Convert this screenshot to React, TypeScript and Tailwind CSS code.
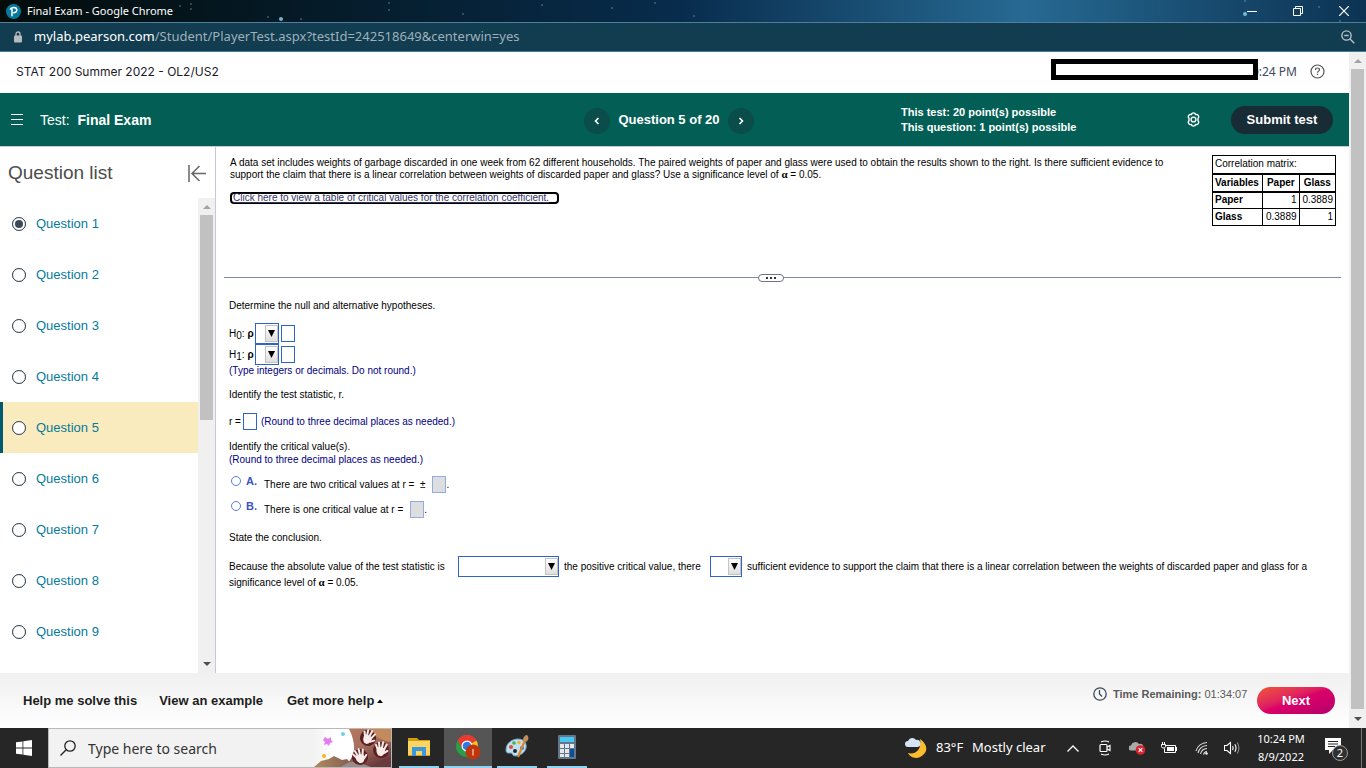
import type { ReactNode } from "react";

const QUESTIONS = [1, 2, 3, 4, 5, 6, 7, 8, 9];
const CURRENT = 5;

const STARS: [number, number, number][] = [
  [180, 6, 1], [191, 4, 1], [191, 9, 1], [268, 17, 1], [281, 19, 2], [301, 19, 1], [389, 3, 1], [389, 10, 1],
  [463, 14, 1], [542, 5, 1], [612, 8, 1], [655, 3, 1], [694, 16, 1], [1245, 1, 1], [1245, 14, 2], [1319, 7, 1], [1340, 21, 1],
];

function TitleBar() {
  return (
    <div className="relative flex h-[23px] shrink-0 items-center overflow-hidden border-b border-[#4f7f9b] bg-linear-to-r from-[#030c0b] via-[#082c4d] to-[#0c3353] pl-[6px] text-white">
      <div className="absolute inset-y-0 right-0 left-1/2 bg-linear-to-r from-transparent via-[#2a709a] to-transparent opacity-90" />
      <svg className="absolute inset-0 h-full w-full" aria-hidden="true">
        {STARS.map(([x, y, r]) => (
          <circle key={`${x}-${y}`} cx={x} cy={y} r={r} fill="#7fc4e2" opacity={r > 1 ? 0.9 : 0.4} />
        ))}
      </svg>
      <svg className="relative mr-[6px] size-[15px]" viewBox="0 0 16 16" aria-hidden="true">
        <circle cx="8" cy="8" r="8" fill="#047a9c" />
        <path d="M6.400 13V4.200M4.400 6c.6-1.700 2-2.400 3.800-2.400 2 0 3.300 1.100 3.300 2.800 0 1.900-1.500 3-3.900 2.800" fill="none" stroke="#fff" strokeWidth="1.600" />
      </svg>
      <span className="relative font-['Noto_Sans',sans-serif] text-[11px]">Final Exam - Google Chrome</span>
      <div className="relative ml-auto flex items-center pr-[17px]">
        <button type="button" aria-label="Minimize" className="mr-[36px]">
          <svg width="10" height="10" viewBox="0 0 10 10"><path d="M0 5.500h10" stroke="#fff" /></svg>
        </button>
        <button type="button" aria-label="Restore" className="mr-[36px]">
          <svg width="10" height="10" viewBox="0 0 10 10" fill="none" stroke="#fff">
            <path d="M.5 2.500h7v7h-7zM2.500 2.500v-2h7v7h-2" />
          </svg>
        </button>
        <button type="button" aria-label="Close">
          <svg width="10" height="10" viewBox="0 0 10 10"><path d="M0 0l10 10M10 0L0 10" stroke="#fff" strokeWidth="1.200" /></svg>
        </button>
      </div>
    </div>
  );
}

function AddressBar() {
  return (
    <div className="flex h-[29px] shrink-0 items-center border-b border-[#4a7a93] bg-[#123c50] pl-[14px] pr-[11px]">
      <svg className="mr-[12px]" width="8" height="12" viewBox="0 0 8 12" aria-hidden="true">
        <path d="M2 5V3a2 2 0 014 0v2" fill="none" stroke="#b5bcc1" strokeWidth="1.300" />
        <rect y="4.500" width="8" height="7" rx="1" fill="#b5bcc1" />
      </svg>
      <span className="font-['Noto_Sans',sans-serif] text-[13px] text-[#9fb0b9]">
        <span className="text-white">mylab.pearson.com</span>/Student/PlayerTest.aspx?testId=242518649&amp;centerwin=yes
      </span>
      <svg className="ml-auto" width="14" height="14" viewBox="0 0 14 14" fill="none" stroke="#b8c2c8" strokeWidth="1.400" aria-hidden="true">
        <circle cx="5.500" cy="5.500" r="4.600" />
        <path d="M9 9l4.300 4.300M3.300 5.500h4.400" />
      </svg>
    </div>
  );
}

function ScrollArrow({ up, dark }: { up?: boolean; dark?: boolean }) {
  return (
    <svg className="my-[6px] shrink-0" width="8" height="5" viewBox="0 0 8 5" aria-hidden="true">
      <path d={up ? "M0 5L4 1l4 4z" : "M0 0l4 4 4-4z"} fill={dark ? "#505050" : "#a3a3a3"} />
    </svg>
  );
}

function CourseBar() {
  return (
    <div className="flex h-[41px] shrink-0 items-center pb-[2px] pl-4 pr-[24px]">
      <span className="font-['Inter',sans-serif] text-[12px] text-[#1a1a2a]">STAT 200 Summer 2022 - OL2/US2</span>
      {/* name box sits over the start of the clock */}
      <div className="relative z-10 mb-[4px] ml-auto h-[21px] w-[207px] border-[5px] border-black bg-white" />
      <span className="-ml-[6px] font-['Noto_Sans',sans-serif] text-[12px] text-[#3d4a5a]">0:24 PM</span>
      <button type="button" aria-label="Help" className="ml-[13px]">
        <svg width="15" height="15" viewBox="0 0 15 15" fill="none" stroke="#555" strokeWidth="1.200">
          <circle cx="7.500" cy="7.500" r="6.500" />
          <path d="M5.500 6c0-1.300.8-2 2-2s2 .7 2 1.800c0 1.300-2 1.400-2 2.900M7.500 9.800v1.200" />
        </svg>
      </button>
    </div>
  );
}

function RoundArrow({ label, d }: { label: string; d: string }) {
  return (
    <button type="button" aria-label={label} className="mt-[2px] grid size-[26px] place-items-center rounded-full bg-[#0a4d4a]">
      <svg width="6" height="8" viewBox="0 0 6 8" fill="none" stroke="#fff" strokeWidth="1.600"><path d={d} /></svg>
    </button>
  );
}

function TestBar() {
  return (
    <header className="flex h-[54px] shrink-0 items-center border-b border-[#c7c7d5] bg-[#035f55] pl-[11px] pr-4 text-white">
      <button type="button" aria-label="Menu" className="mr-[17px]">
        <svg width="12" height="11" viewBox="0 0 12 11" stroke="#fff"><path d="M0 .5h12M0 5.500h12M0 10.500h12" /></svg>
      </button>
      <h1 className="w-[544px] pt-px text-[14px]">
        Test: <b className="ml-1">Final Exam</b>
      </h1>
      <RoundArrow label="Previous question" d="M4.500 1L1.500 4l3 3" />
      <span className="w-[118px] text-center text-[13px] font-bold">Question 5 of 20</span>
      <RoundArrow label="Next question" d="M1.500 1l3 3-3 3" />
      <div className="ml-[147px] pt-px text-[11px] leading-[15px] font-bold">
        <p>This test: 20 point(s) possible</p>
        <p>This question: 1 point(s) possible</p>
      </div>
      <button type="button" aria-label="Settings" className="ml-auto">
        <svg width="15" height="15" viewBox="0 0 15 15" fill="none" stroke="#fff" strokeWidth="1.400" strokeLinejoin="round">
          <circle cx="7.500" cy="7.500" r="2.400" />
          <path d="M5.900 1.500q1.600-1.200 3.200 0l.5 1.100 1.400-.2q1.900.8 1.700 2.700L12 6.300v2.400l.7 1.200q.2 1.900-1.700 2.700l-1.400-.2-.5 1.100q-1.600 1.200-3.200 0l-.5-1.100-1.400.2q-1.900-.8-1.700-2.700L3 8.700V6.300l-.7-1.200Q2.100 3.200 4 2.400l1.400.2z" />
        </svg>
      </button>
      <button type="button" className="ml-[30px] h-[28px] w-[102px] rounded-full bg-[#182c36] text-[13px] font-bold">Submit test</button>
    </header>
  );
}

function QuestionList() {
  return (
    <aside className="flex w-[216px] shrink-0 flex-col border-r border-[#c7c7d5]">
      <div className="flex h-[51px] items-center justify-between pt-px pl-2 pr-[9px]">
        <h2 className="text-[19px] text-[#4d4d4d]">Question list</h2>
        <button type="button" aria-label="Collapse list">
          <svg width="18" height="17" viewBox="0 0 18 17" fill="none" stroke="#666" strokeWidth="1.500">
            <path d="M1 0v17M4 8.500h14M11.500 1L4 8.500l7.500 7.500" />
          </svg>
        </button>
      </div>
      <div className="flex grow">
        <ul className="grow">
          {QUESTIONS.map((n) => (
            <li key={n} className={n === CURRENT ? "border-l-[3px] border-[#005a70] bg-[#f9ebbd]" : "border-l-[3px] border-transparent"}>
              <label className="flex h-[51px] items-center gap-[10px] pl-[9px] text-[13px] text-[#047a9c]">
                <input
                  type="radio"
                  name="question"
                  defaultChecked={n === 1}
                  className="size-[14px] appearance-none rounded-full border border-[#3c4a57] bg-white p-[2px] outline-1 -outline-offset-1 outline-[#3c4a57]/40 checked:bg-[#3c4a57] checked:bg-clip-content"
                />
                Question {n}
              </label>
            </li>
          ))}
        </ul>
        <div className="flex w-[17px] flex-col items-center bg-[#f0f0f0]">
          <ScrollArrow up />
          <div className="h-[205px] w-[13px] bg-[#c1c1c1]" />
          <div className="mt-auto"><ScrollArrow dark /></div>
        </div>
      </div>
    </aside>
  );
}

function Dropdown({ label, className }: { label: string; className: string }) {
  return (
    <span className={`relative block h-[21px] shrink-0 ${className}`}>
      <select aria-label={label} className="block h-full w-full appearance-none border border-[#2f63c9] bg-white" />
      <span className="pointer-events-none absolute top-[2px] right-[1px] grid h-[17px] w-[13px] place-items-center border border-[#c4c4c4] bg-linear-to-b from-white to-[#dedede]">
        <svg width="7" height="7" viewBox="0 0 7 7" aria-hidden="true"><path d="M0 0h7L3.500 7z" /></svg>
      </span>
    </span>
  );
}

function Blank({ label, disabled }: { label: string; disabled?: boolean }) {
  return (
    <input
      aria-label={label}
      disabled={disabled}
      className="h-[17px] w-[14px] shrink-0 border border-[#2f63c9] bg-white disabled:border-[#93acdf] disabled:bg-[#dedede]"
    />
  );
}

function Hypothesis({ sub }: { sub: string }) {
  return (
    <div className="flex h-[21px] items-center">
      <span className="flex w-[26px] items-center">
        H<span className="mt-[5px]">{sub}</span>: <b className="ml-[3px]">ρ</b>
      </span>
      <Dropdown label={`Relation for H${sub}`} className="mr-[2px] w-[24px]" />
      <Blank label={`Value for H${sub}`} />
    </div>
  );
}

function Choice({ letter, children }: { letter: string; children: ReactNode }) {
  return (
    <div className="flex h-[17px] items-center">
      <label className="mb-[8px] flex w-[35px] items-center gap-[5px] pl-[2px] text-[11px] font-bold text-[#3a53c5]">
        <input type="radio" name="critical" className="size-[10px] appearance-none rounded-full border border-[#5d7bd0]" />
        {letter}.
      </label>
      {children}
    </div>
  );
}

const Alpha = () => <b className="font-['Liberation_Serif',serif] text-[11px] leading-[10px]">α</b>;

function CorrelationTable() {
  return (
    <table className="h-[71px] w-[124px] shrink-0 border-collapse border border-black leading-[12px] [&_td]:border [&_td]:border-black [&_td]:px-[2px] [&_th]:border [&_th]:border-black [&_th]:px-[2px]">
      <thead>
        <tr className="h-[18px] border-b-2 border-black">
          <td colSpan={3}>Correlation matrix:</td>
        </tr>
        <tr className="h-[18px] border-b-2 border-black">
          <th className="text-left">Variables</th>
          <th>Paper</th>
          <th>Glass</th>
        </tr>
      </thead>
      <tbody>
        <tr className="h-[17px]">
          <th className="text-left">Paper</th>
          <td className="text-right">1</td>
          <td className="text-right">0.3889</td>
        </tr>
        <tr className="h-[17px]">
          <th className="text-left">Glass</th>
          <td className="text-right">0.3889</td>
          <td className="text-right">1</td>
        </tr>
      </tbody>
    </table>
  );
}

function Exercise() {
  return (
    <main className="min-w-0 grow text-[10px] leading-[12px] text-black">
      <section className="flex h-[130px] justify-between pt-[8px] pr-[13px] pl-[14px]">
        <div className="pt-[2px]">
          <p>
            A data set includes weights of garbage discarded in one week from 62 different households. The paired weights of paper and glass were used to obtain the results shown to the right. Is there sufficient evidence to
            <br />
            support the claim that there is a linear correlation between weights of discarded paper and glass? Use a significance level of <Alpha /> = 0.05.
          </p>
          <a href="#critical-values" className="mt-[11px] block h-[12px] w-[329px] rounded-[4px] border-2 border-black pl-px leading-[8px] whitespace-nowrap text-[#333366] underline">
            Click here to view a table of critical values for the correlation coefficient.
          </a>
        </div>
        <CorrelationTable />
      </section>
      <div className="mx-2 flex h-px items-center justify-center bg-[#8189a0] pr-6">
        <button type="button" aria-label="Resize panes" className="grid h-[8px] w-[26px] place-items-center rounded-full border border-[#6b7489] bg-white">
          <svg width="10" height="2" viewBox="0 0 10 2"><path d="M0 0h2v2H0zM4 0h2v2H4zM8 0h2v2H8z" fill="#333" /></svg>
        </button>
      </div>
      <section className="px-[13px] pt-[22px]">
        <p className="mb-[11px]">Determine the null and alternative hypotheses.</p>
        <Hypothesis sub="0" />
        <Hypothesis sub="1" />
        <p className="text-[#000080]">(Type integers or decimals. Do not round.)</p>
        <p className="my-[12px]">Identify the test statistic, r.</p>
        <div className="flex items-center">
          <span className="w-[14px]">r =</span>
          <Blank label="Test statistic r" />
          <span className="ml-1 text-[#000080]">(Round to three decimal places as needed.)</span>
        </div>
        <p className="mt-[11px]">Identify the critical value(s).</p>
        <p className="mt-px mb-[10px] text-[#000080]">(Round to three decimal places as needed.)</p>
        <Choice letter="A">
          <span className="mr-[7px]">There are two critical values at r = &nbsp;±</span>
          <Blank label="Critical values" disabled />.
        </Choice>
        <div className="h-[8px]" />
        <Choice letter="B">
          <span className="mr-[7px]">There is one critical value at r =</span>
          <Blank label="Critical value" disabled />.
        </Choice>
        <p className="mt-[14px] mb-[12px]">State the conclusion.</p>
        <div className="flex items-center gap-[5px] whitespace-nowrap">
          <span className="w-[224px]">Because the absolute value of the test statistic is</span>
          <Dropdown label="Comparison" className="w-[101px]" />
          <span className="w-[141px]">the positive critical value, there</span>
          <Dropdown label="Is or is not" className="w-[32px]" />
          <span>sufficient evidence to support the claim that there is a linear correlation between the weights of discarded paper and glass for a</span>
        </div>
        <p>significance level of <Alpha /> = 0.05.</p>
      </section>
    </main>
  );
}

function HelpFooter() {
  return (
    <footer className="flex h-[55px] shrink-0 items-center bg-linear-to-b from-[#f0f0f0] to-white pl-[23px] pr-[14px] text-[13px] font-bold text-[#1d1d1d]">
      <button type="button" className="mr-[22px]">Help me solve this</button>
      <button type="button" className="mr-[24px]">View an example</button>
      <button type="button" className="flex items-center gap-[3px]">
        Get more help
        <svg width="6" height="4" viewBox="0 0 6 4" aria-hidden="true"><path d="M0 4l3-3.500L6 4z" /></svg>
      </button>
      <svg className="mr-[6px] mb-[14px] ml-auto" width="14" height="14" viewBox="0 0 14 14" fill="none" stroke="#3c4a57" strokeWidth="1.300" aria-hidden="true">
        <circle cx="7" cy="7" r="6.200" />
        <path d="M6.500 3v4l2.500 2.500" />
      </svg>
      <span className="mb-[12px] w-[137px] text-[11px] whitespace-nowrap text-[#5a5a5a]">
        Time Remaining: <span className="font-normal">01:34:07</span>
      </span>
      <button type="button" className="ml-[7px] h-[27px] w-[78px] rounded-full bg-linear-to-br from-[#f0522b] via-[#db0068] to-[#b5006c] text-[13px] text-white">Next</button>
    </footer>
  );
}

function SearchArt() {
  return (
    <svg className="h-full w-[77px] shrink-0" viewBox="0 0 77 38" preserveAspectRatio="none" aria-hidden="true">
      <defs>
        <linearGradient id="skin" x1="0" y1="0" x2=".6" y2="1">
          <stop offset="0" stopColor="#b9775a" />
          <stop offset=".5" stopColor="#a5705f" />
          <stop offset="1" stopColor="#6b3a3c" />
        </linearGradient>
        <linearGradient id="dusk" x1="0" y1="0" x2="1" y2="0">
          <stop offset="0" stopColor="#b08a5c" />
          <stop offset="1" stopColor="#7f5b52" />
        </linearGradient>
        <linearGradient id="fade" x1="0" y1="0" x2="1" y2="0">
          <stop offset="0" stopColor="#f2f2f2" />
          <stop offset=".5" stopColor="#fff" />
        </linearGradient>
        <g id="hand">
          <ellipse rx="8" ry="8" fill="#5d1f24" />
          <g stroke="#f6ece8" strokeWidth="2" strokeLinecap="round">
            <path d="M-4-1l-2-3M-2-2l-1.500-5M.5-2.500V-8M3-1.500l1.500-5M4 2l2.500-2.500" />
          </g>
          <path d="M-4.500-1.500Q0-4 4-1.500 5 4 1.500 6h-3Q-5 3-4.500-1.500z" fill="#f6ece8" />
        </g>
      </defs>
      <path d="M0 0h40v38H0z" fill="url(#fade)" />
      <path d="M35 0h42v38H28c7-3 13-12 12-22C39 8 37 4 35 0z" fill="url(#skin)" />
      <path d="M55 0h22v13C68 12 60 7 55 0z" fill="#c48a5c" />
      <path d="M0 38l7-6 8-2 5-3 8 4 5-1 7 8z" fill="url(#dusk)" />
      <path d="M27 38c6-5 14-7 22-3l8 3z" fill="#9c8b8d" />
      <use href="#hand" transform="translate(54 9) rotate(28)" />
      <use href="#hand" transform="translate(67 21) rotate(12)" />
      <use href="#hand" transform="translate(46 28) rotate(-14)" />
      <path d="M11 8l3 2 3-2v3l2 2-3 1-1 3-2-2-3 1 1-3-2-2z" fill="#e27cf0" />
      <circle cx="29" cy="5" r="2" fill="#62d4e6" />
      <circle cx="10" cy="27" r="2" fill="#ffb21a" />
    </svg>
  );
}

function TaskButton({ label, active, children }: { label: string; active?: boolean; children: ReactNode }) {
  return (
    <button
      type="button"
      aria-label={label}
      className={active ? "grid h-full w-[48px] place-items-center border-b-2 border-[#8fd3f2] bg-[#555555]" : "mx-[5px] grid h-full w-[40px] place-items-center border-b-2 border-[#8fd3f2]"}
    >
      {children}
    </button>
  );
}

function Taskbar() {
  return (
    <div className="flex h-[40px] shrink-0 items-center bg-[#262627] font-['Noto_Sans',sans-serif] text-white">
      <button type="button" aria-label="Start" className="grid w-[48px] place-items-center">
        <svg width="16" height="16" viewBox="0 0 16 16" fill="#fff"><path d="M0 2.300l6.500-.9v6.200H0zM7.300 1.300L16 0v7.600H7.300zM0 8.400h6.500v6.200L0 13.700zM7.300 8.400H16V16l-8.700-1.300z" /></svg>
      </button>
      <div className="flex h-full w-[344px] items-center border border-[#b9b9b9] bg-[#f2f2f2] pl-[11px]">
        <svg className="mr-[12px] shrink-0" width="16" height="16" viewBox="0 0 16 16" fill="none" stroke="#222" strokeWidth="1.300" aria-hidden="true">
          <circle cx="10" cy="6" r="5.200" />
          <path d="M6.200 9.800L.5 15.500" />
        </svg>
        <input aria-label="Search" placeholder="Type here to search" className="min-w-0 grow text-[14px] placeholder:text-[#333]" />
        <SearchArt />
      </div>
      <div className="ml-[2px] flex h-full">
        <TaskButton label="File Explorer">
          <svg width="22" height="20" viewBox="0 0 22 20">
            <path d="M0 1h9l2 2h11v16H0z" fill="#d99b16" />
            <path d="M0 4h22v14H0z" fill="#fcd462" />
            <path d="M4 19v-9h14v9h-4v-5H8v5z" fill="#3b97dc" />
          </svg>
        </TaskButton>
        <TaskButton label="Google Chrome" active>
          <svg width="26" height="26" viewBox="0 0 26 26">
            <path d="M12 12L2.500 6.500A11 11 0 0121.500 6.500z" fill="#e63b2e" />
            <path d="M12 12L2.500 6.500A11 11 0 0012 23z" fill="#24a148" />
            <path d="M12 12L21.500 6.500A11 11 0 0112 23z" fill="#fcc31e" />
            <path d="M12 6.500h9.500A11 11 0 002.500 6.500l4.700 8z" fill="#e63b2e" />
            <circle cx="12" cy="12" r="5.500" fill="#fff" />
            <circle cx="12" cy="12" r="4.300" fill="#3278e5" />
            <circle cx="18" cy="18" r="7.500" fill="#bf360c" />
            <path d="M18 15v6.500" stroke="#f1c6b8" strokeWidth="1.300" />
          </svg>
        </TaskButton>
        <TaskButton label="Paint">
          <svg width="24" height="24" viewBox="0 0 24 24">
            <path d="M1 15C1 8 7 4 13 4s9 4 8 9-7 8-11 8c-3 0-2-3-4-3s-5 1-5-3z" fill="#bfe0f0" stroke="#6ba6c8" />
            <circle cx="6" cy="12" r="2" fill="#e14b42" />
            <circle cx="9" cy="8" r="1.800" fill="#48ae4c" />
            <circle cx="14" cy="7.500" r="1.800" fill="#f1b62b" />
            <circle cx="17" cy="13" r="2" fill="#356fc4" />
            <circle cx="10" cy="16" r="2" fill="#262627" />
            <path d="M20 5l-7 17" stroke="#db872e" strokeWidth="2.200" />
            <path d="M18 5c0-3 2-5 4-5 2 2 2 5-1 7z" fill="#bf8e5f" />
          </svg>
        </TaskButton>
        <TaskButton label="Calculator">
          <svg width="18" height="24" viewBox="0 0 18 24">
            <rect width="18" height="24" rx="1" fill="#64778a" />
            <path d="M2 2h14v5H2z" fill="#45c8f2" />
            <path d="M2 9h4v4H2zM7 9h4v4H7zM12 9h4v4h-4zM2 14h4v4H2zM7 14h4v4H7zM2 19h4v3H2zM7 19h4v3H7z" fill="#e3e8ec" />
            <path d="M12 14h4v8h-4z" fill="#0d4e96" />
          </svg>
        </TaskButton>
      </div>
      <svg className="mr-[9px] ml-auto" width="22" height="22" viewBox="0 0 22 22" aria-hidden="true">
        <path d="M15 2c6 4 9 11 3 16-5 5-13 3-15-2 8 2 14-4 12-14z" fill="#fbbd2c" />
        <path d="M3 10a3 3 0 010-6 4.500 4.500 0 018-1 3.500 3.500 0 012 7z" fill="#d5e4f6" />
      </svg>
      <span className="w-[36px] text-[13px]">83°F</span>
      <span className="w-[95px] text-[13px] whitespace-nowrap">Mostly clear</span>
      <svg width="12" height="7" viewBox="0 0 12 7" fill="none" stroke="#fff" strokeWidth="1.300" aria-hidden="true"><path d="M.5 6.500L6 1l5.500 5.500" /></svg>
      <svg className="ml-[20px]" width="12" height="16" viewBox="0 0 12 16" fill="none" stroke="#fff" strokeWidth="1.200" aria-hidden="true">
        <rect x="1" y="4.500" width="7" height="7" rx="1" />
        <path d="M8 7l3-1.500v5L8 9M2 2q4-2 8 0M2 14q4 2 8 0" />
      </svg>
      <svg className="ml-[18px]" width="17" height="14" viewBox="0 0 17 14" aria-hidden="true">
        <path d="M2 9.500a2.500 2.500 0 010-5 4.500 4.500 0 018-1.500 3 3 0 014 4v2.500z" fill="#aaa" />
        <circle cx="11.500" cy="9" r="4.800" fill="#d9232e" />
        <path d="M9.700 7.200l3.600 3.600M13.300 7.200l-3.600 3.600" stroke="#fff" strokeWidth="1.200" />
      </svg>
      <svg className="ml-[15px]" width="16" height="13" viewBox="0 0 16 13" fill="none" stroke="#fff" aria-hidden="true">
        <path d="M4.500 3.500h10v7h-11v-4M15.500 5v4M.5 2.500h4v2l-1 1.500h-2l-1-1.500zM1.500 0v2.500M3.500 0v2.500" />
        <path d="M6 5h7v4H6z" fill="#fff" stroke="none" />
      </svg>
      <svg className="ml-[18px]" width="14" height="14" viewBox="0 0 14 14" fill="none" stroke="#ddd" strokeWidth="1.100" aria-hidden="true">
        <path d="M1 10A12 12 0 0112 1.500M3 12A10 10 0 0112 4.500M5.500 13A7 7 0 0112 7.500M8.500 13.500a4 4 0 013.500-3" />
        <circle cx="11.500" cy="12.500" r="1.200" fill="#fff" stroke="none" />
      </svg>
      <svg className="ml-[15px]" width="17" height="14" viewBox="0 0 17 14" fill="none" stroke="#fff" strokeWidth="1.100" aria-hidden="true">
        <path d="M.5 4.500h2.500l3.500-3v11L3 9.500H.5zM8.500 5q1.300 2 0 4M10.800 3.300q2.500 3.700 0 7.400" />
        <path d="M13.200 1.500q3.500 5.500 0 11" stroke="#888" />
      </svg>
      <div className="ml-[15px] w-[50px] text-center text-[11px] leading-[18px] whitespace-nowrap">
        <p>10:24 PM</p>
        <p>8/9/2022</p>
      </div>
      <svg className="mr-[12px] ml-[19px]" width="24" height="26" viewBox="0 0 24 26" aria-hidden="true">
        <path d="M0 3h16v12H8l-4 4v-4H0z" fill="#fff" />
        <path d="M3 6.500h10M3 9h10M3 11.500h7" stroke="#262627" />
        <circle cx="15" cy="18" r="7.500" fill="#303031" stroke="#999" />
        <text x="15" y="22" textAnchor="middle" fontSize="11" fill="#fff">2</text>
      </svg>
      <div className="mr-[4px] h-full w-px bg-[#77777a]" />
    </div>
  );
}

export default function App() {
  return (
    <div className="flex min-h-screen flex-col bg-white font-['Liberation_Sans',Arial,sans-serif]">
      <TitleBar />
      <AddressBar />
      <div className="flex grow">
        <div className="flex min-w-0 grow flex-col">
          <CourseBar />
          <TestBar />
          <div className="flex grow">
            <QuestionList />
            <Exercise />
          </div>
          <HelpFooter />
        </div>
        <div className="flex w-[17px] shrink-0 flex-col items-center bg-[#f0f0f0]">
          <ScrollArrow up />
          <div className="w-[13px] grow bg-[#c1c1c1]" />
          <div className="pt-[2px]"><ScrollArrow dark /></div>
        </div>
      </div>
      <Taskbar />
    </div>
  );
}
